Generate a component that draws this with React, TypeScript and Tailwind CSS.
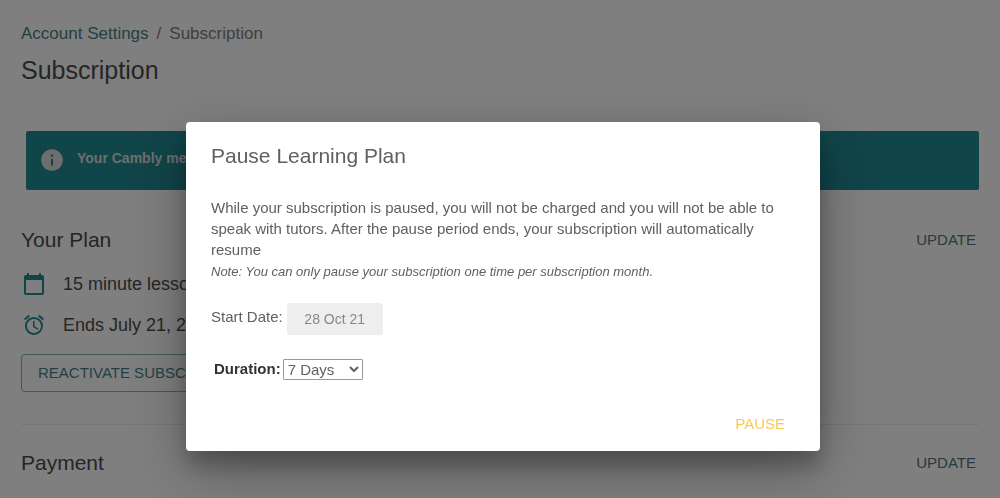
import type { ReactNode } from 'react';
import { MdAccessAlarm, MdCalendarToday, MdInfo } from 'react-icons/md';

const DURATIONS = ['7 Days', '14 Days', '30 Days'];

export default function App() {
  return (
    <div className="min-h-screen bg-white font-['Liberation_Sans',Arial,sans-serif] text-[#4c4c4c]">
      <SubscriptionPage />
      <PauseDialog />
    </div>
  );
}

const SubscriptionPage = () => {
  return (
    <main className="h-screen overflow-hidden px-[21px] pt-[22px]">
      <nav className="flex gap-2 text-[17px] leading-6" aria-label="Breadcrumb">
        <a href="#account" className="text-[#4a7f83]">
          Account Settings
        </a>
        <span className="text-[#808080]">/</span>
        <span className="text-[#808080]">Subscription</span>
      </nav>
      <h1 className="mt-2 text-[25px] leading-8">Subscription</h1>

      <div className="mt-[45px] ml-[5px] flex h-[59px] rounded-xs bg-[#218a93] px-[13px] text-[#dcdcdc]">
        <MdInfo className="mt-4 size-[26px] shrink-0" />
        <p className="mt-[17px] ml-3 text-sm leading-5 font-bold">Your Cambly membership</p>
      </div>

      <section className="mt-9">
        <SectionHeader title="Your Plan" />
        <ul className="mt-[18px] flex flex-col gap-[17px] pl-px text-lg leading-6">
          <PlanItem icon={<MdCalendarToday />}>15 minute lessons</PlanItem>
          <PlanItem icon={<MdAccessAlarm />}>Ends July 21, 2022</PlanItem>
        </ul>
        <button className="mt-[17px] h-[38px] rounded-sm border border-[#7fb5b9] px-4 text-[15px] text-[#3f8388]">
          REACTIVATE SUBSCRIPTION
        </button>
      </section>

      <section className="mt-8 border-t border-[#ececec] pt-6">
        <SectionHeader title="Payment" />
      </section>
    </main>
  );
};

const SectionHeader = ({ title }: { title: string }) => {
  return (
    <div className="flex items-center justify-between pr-[3px]">
      <h2 className="text-[21px] leading-7">{title}</h2>
      <button className="text-[15px] leading-6 text-[#50757a]">UPDATE</button>
    </div>
  );
};

const PlanItem = ({ icon, children }: { icon: ReactNode; children: ReactNode }) => {
  return (
    <li className="flex items-center gap-[17px]">
      <span className="text-2xl text-[#218a93]">{icon}</span>
      {children}
    </li>
  );
};

const PauseDialog = () => {
  return (
    <div className="fixed inset-0 flex items-start justify-center bg-black/50 pt-[122px] pl-[6px]">
      <div
        role="dialog"
        aria-labelledby="pause-title"
        className="w-full max-w-[634px] rounded-sm bg-white px-[25px] pt-5 pb-[15px] text-[#606060] shadow-[0_19px_60px_rgba(0,0,0,0.3),0_15px_20px_rgba(0,0,0,0.22)]"
      >
        <h2 id="pause-title" className="text-[21px] leading-7">
          Pause Learning Plan
        </h2>
        <p className="mt-[27px] text-[15px] leading-[21px]">
          While your subscription is paused, you will not be charged and you will not be able to
          speak with tutors. After the pause period ends, your subscription will automatically
          resume
        </p>
        <p className="text-[13px] leading-6 italic">
          Note: You can only pause your subscription one time per subscription month.
        </p>

        <div className="mt-[19px] flex items-start gap-1 text-[15px]">
          <label htmlFor="start-date" className="leading-7">
            Start Date:
          </label>
          <input
            id="start-date"
            defaultValue="28 Oct 21"
            readOnly
            className="h-8 w-24 rounded-[3px] bg-[#eee] text-center text-sm text-[#888]"
          />
        </div>

        <div className="mt-[23px] ml-[3px] flex items-center gap-0.5 text-[15px]">
          <label htmlFor="duration" className="font-bold text-[#333]">
            Duration:
          </label>
          <select
            id="duration"
            className="h-[21px] w-20 rounded-[1px] border border-[#999] bg-white"
          >
            {DURATIONS.map((duration) => (
              <option key={duration}>{duration}</option>
            ))}
          </select>
        </div>

        <div className="mt-[31px] flex justify-end pr-[10px]">
          <button className="text-[15px] leading-6 text-[#fdc84f]">PAUSE</button>
        </div>
      </div>
    </div>
  );
};
